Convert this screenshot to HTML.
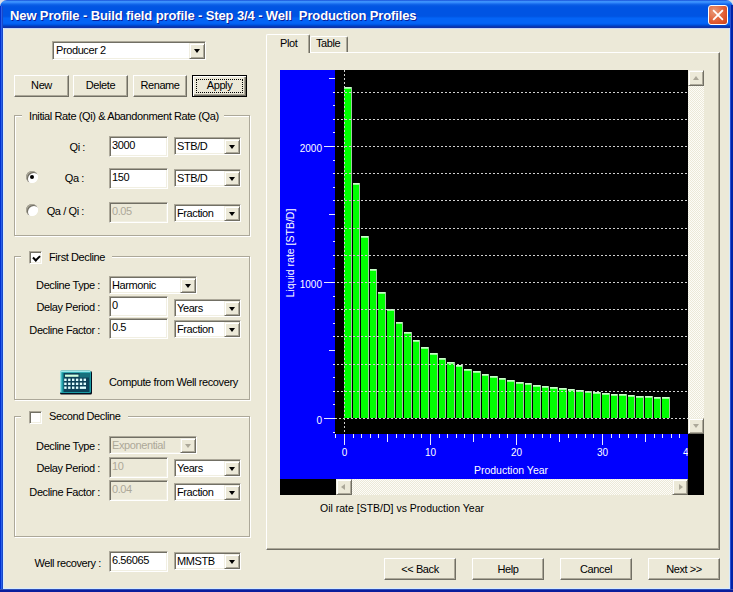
<!DOCTYPE html>
<html><head><meta charset="utf-8">
<style>
*{margin:0;padding:0;box-sizing:border-box}
html,body{width:733px;height:592px;overflow:hidden;background:#ece9d8}
body{position:relative;font-family:"Liberation Sans",sans-serif;font-size:11px;color:#000;letter-spacing:-0.4px}
.a{position:absolute}
.t{position:absolute;white-space:pre;line-height:13px}
#corner{position:absolute;left:0;top:0;width:733px;height:10px;background:#d9dde8}
#title{position:absolute;left:0;top:0;width:733px;height:29px;border-radius:7px 7px 0 0;
background:linear-gradient(to bottom,#0a3acf 0px,#3d8ef8 1px,#3c94ff 2px,#2d80f8 3px,#1569ec 4px,#0a5ee6 5px,#0556e2 6px,#0054e3 8px,#0054e3 16px,#0059e8 17px,#0464f6 18px,#0464f6 23px,#005ef2 24px,#0050da 25px,#0040c4 26px,#1033a8 27px,#1033a8 28px,#c9daf8 28px,#c9daf8 29px)}
#ttext{position:absolute;left:10px;top:8px;color:#fff;font-weight:bold;font-size:13px;letter-spacing:-0.12px;white-space:pre;line-height:15px;text-shadow:1px 1px 0 #0a1e9a}
#lb{position:absolute;left:0;top:6px;width:3px;height:586px;background:linear-gradient(to right,#0030d0 0,#0030d0 1px,#2a60e8 1px,#2a60e8 2px,#1848c8 2px)}
#ll{position:absolute;left:3px;top:28px;width:1px;height:561px;background:#d8ecff}
#rb{position:absolute;left:730px;top:5px;width:3px;height:587px;background:linear-gradient(to right,#2a50d0 0,#2a50d0 1px,#0024a8 1px)}
#rl{position:absolute;left:729px;top:28px;width:1px;height:561px;background:#d8ecff}
#bb{position:absolute;left:0;top:589px;width:733px;height:3px;background:linear-gradient(to bottom,#3050b8 0,#3050b8 1px,#0a1c9c 1px)}
#bl{position:absolute;left:3px;top:588px;width:727px;height:1px;background:#d8ecff}
#close{position:absolute;left:708px;top:5px;width:20px;height:20px;border:1px solid #fff;border-radius:3px;
background:radial-gradient(circle at 30% 30%,#e89a7a,#e05a30 60%,#c8401a)}

.btn{position:absolute;background:#ece9d8;border-top:1px solid #fff;border-left:1px solid #fff;border-right:1px solid #716f64;border-bottom:1px solid #716f64;box-shadow:inset -1px -1px 0 #aca899;text-align:center;line-height:19px;white-space:pre}
.btn.def{border:1px solid #000;box-shadow:inset 1px 1px 0 #fff,inset -1px -1px 0 #716f64,inset -2px -2px 0 #aca899}
.focus{position:absolute;left:3px;top:3px;right:3px;bottom:3px;border:1px dotted #000}
.ed{position:absolute;background:#fff;border-top:1px solid #aca899;border-left:1px solid #aca899;border-right:1px solid #fff;border-bottom:1px solid #fff;box-shadow:inset 1px 1px 0 #716f64,inset -1px -1px 0 #f1efe2}
.ed.dis{background:#ece9d8}
.et{position:absolute;left:2px;top:2px;white-space:pre;line-height:13px}
.cb.dis{background:#ece9d8}
.dis .et,.dis .ct{color:#aca899}
.cb{position:absolute;background:#fff;border-top:1px solid #aca899;border-left:1px solid #aca899;border-right:1px solid #fff;border-bottom:1px solid #fff;box-shadow:inset 1px 1px 0 #716f64,inset -1px -1px 0 #f1efe2}
.ct{position:absolute;left:2px;top:2px;white-space:pre;line-height:13px}
.dd{position:absolute;right:0;top:1px;bottom:0;width:16px;background:#ece9d8;border-top:1px solid #f1efe2;border-left:1px solid #f1efe2;border-right:1px solid #716f64;border-bottom:1px solid #716f64;box-shadow:inset 1px 1px 0 #fff,inset -1px -1px 0 #aca899}
.dd:after{content:"";position:absolute;left:4px;top:50%;margin-top:-2px;border-left:3.5px solid transparent;border-right:3.5px solid transparent;border-top:4px solid #000}
.dis .dd:after{border-top-color:#aca899}
.grp{position:absolute;border:1px solid #aca899;box-shadow:1px 1px 0 #fff,inset 1px 1px 0 #fff}
.lbl{background:#ece9d8}
.r{text-align:right}
.radio{position:absolute;width:12px;height:12px;border-radius:50%;background:#fff;box-shadow:inset 1px 1px 0 #aca899,inset 2px 2px 0 #716f64,inset -1px -1px 0 #fff}
.radio.on:after{content:"";position:absolute;left:4px;top:4px;width:4px;height:4px;border-radius:50%;background:#000}
.chk{position:absolute;width:13px;height:13px;background:#fff;border-top:1px solid #aca899;border-left:1px solid #aca899;border-right:1px solid #fff;border-bottom:1px solid #fff;box-shadow:inset 1px 1px 0 #716f64,inset -1px -1px 0 #f1efe2}
.chk.on:after{content:"";position:absolute;left:2px;top:1px;width:5px;height:3px;border-left:2px solid #000;border-bottom:2px solid #000;transform:translate(1px,2px) rotate(-45deg)}

.panel{position:absolute;border-top:1px solid #fff;border-left:1px solid #fff;border-right:1px solid #716f64;border-bottom:1px solid #716f64;box-shadow:inset -1px -1px 0 #aca899}
.tab{position:absolute;background:#ece9d8;border-top:1px solid #fff;border-left:1px solid #fff;border-right:1px solid #716f64;box-shadow:inset -1px 0 0 #aca899;border-radius:2px 2px 0 0}
.tab.sel{height:19px}
.vs{position:absolute;background:#f4f3ee;background-image:repeating-conic-gradient(#fdfcf8 0 25%,#ece9d8 0 50%);background-size:2px 2px;opacity:1}
.sbtn{position:absolute;width:16px;height:16px;background:#ece9d8;border-top:1px solid #f1efe2;border-left:1px solid #f1efe2;border-right:1px solid #716f64;border-bottom:1px solid #716f64;box-shadow:inset 1px 1px 0 #fff,inset -1px -1px 0 #aca899}
.arr{position:absolute;width:0;height:0}
.arr.up{left:3.5px;top:5px;border-left:3.5px solid transparent;border-right:3.5px solid transparent;border-bottom:4px solid #aca899}
.arr.dn{left:3.5px;top:5px;border-left:3.5px solid transparent;border-right:3.5px solid transparent;border-top:4px solid #aca899}
.arr.lt{left:4px;top:3.5px;border-top:3.5px solid transparent;border-bottom:3.5px solid transparent;border-right:4px solid #aca899}
.arr.rt{left:6px;top:3.5px;border-top:3.5px solid transparent;border-bottom:3.5px solid transparent;border-left:4px solid #aca899}
.ax{font-family:"Liberation Sans",sans-serif;font-size:10px;fill:#fff;letter-spacing:0}
.ax2{font-family:"Liberation Sans",sans-serif;font-size:10.5px;fill:#fff;letter-spacing:0}
.cap{font-size:10.5px;letter-spacing:0}
</style></head><body>
<div id="corner"></div>
<div id="title"><div id="ttext">New Profile - Build field profile - Step 3/4 - Well  Production Profiles</div></div>
<div id="close"><svg width="19" height="19" style="position:absolute;left:0;top:0"><path d="M4.8 4.8 L13.2 13.2 M13.2 4.8 L4.8 13.2" stroke="#fff" stroke-width="1.8" stroke-linecap="square"/></svg></div>
<div id="lb"></div><div id="ll"></div><div id="rb"></div><div id="rl"></div><div id="bb"></div><div id="bl"></div>
<div class="cb" style="left:52px;top:41px;width:154px;height:19px"><span class="ct" style="left:3px;top:2px">Producer 2</span><i class="dd"></i></div>
<div class="btn" style="left:14px;top:75px;width:55px;height:22px">New</div>
<div class="btn" style="left:73px;top:75px;width:55px;height:22px">Delete</div>
<div class="btn" style="left:133px;top:75px;width:54px;height:22px">Rename</div>
<div class="btn def" style="left:192px;top:75px;width:55px;height:22px"><b class="focus"></b>Apply</div>

<div class="grp" style="left:14px;top:115px;width:236px;height:121px"></div>
<span class="t lbl" style="left:22px;top:110px;padding:0 5px 0 7px">Initial Rate (Qi) &amp; Abandonment Rate (Qa)</span>
<span class="t r" style="right:648px;top:141px">Qi :</span>
<div class="ed" style="left:109px;top:136px;width:59px;height:21px"><span class="et">3000</span></div>
<div class="cb" style="left:174px;top:137px;width:67px;height:18px"><span class="ct">STB/D</span><i class="dd"></i></div>
<div class="radio on" style="left:26px;top:171px"></div>
<span class="t r" style="right:649px;top:172px">Qa :</span>
<div class="ed" style="left:109px;top:168px;width:59px;height:21px"><span class="et">150</span></div>
<div class="cb" style="left:174px;top:169px;width:67px;height:18px"><span class="ct">STB/D</span><i class="dd"></i></div>
<div class="radio" style="left:26px;top:204px"></div>
<span class="t r" style="right:649px;top:205px">Qa / Qi :</span>
<div class="ed dis" style="left:109px;top:202px;width:59px;height:21px"><span class="et">0.05</span></div>
<div class="cb" style="left:174px;top:204px;width:67px;height:18px"><span class="ct">Fraction</span><i class="dd"></i></div>

<div class="grp" style="left:14px;top:256px;width:236px;height:144px"></div>
<span class="t lbl" style="left:21px;top:250px;width:91px;height:13px"></span>
<div class="chk on" style="left:29px;top:251px"></div>
<span class="t" style="left:49px;top:251px">First Decline</span>
<span class="t r" style="right:633px;top:279px">Decline Type :</span>
<div class="cb" style="left:109px;top:276px;width:88px;height:18px"><span class="ct">Harmonic</span><i class="dd"></i></div>
<span class="t r" style="right:633px;top:301px">Delay Period :</span>
<div class="ed" style="left:109px;top:296px;width:59px;height:21px"><span class="et">0</span></div>
<div class="cb" style="left:174px;top:299px;width:67px;height:18px"><span class="ct">Years</span><i class="dd"></i></div>
<span class="t r" style="right:633px;top:324px">Decline Factor :</span>
<div class="ed" style="left:109px;top:318px;width:59px;height:21px"><span class="et">0.5</span></div>
<div class="cb" style="left:174px;top:320px;width:67px;height:18px"><span class="ct">Fraction</span><i class="dd"></i></div>
<svg class="a" style="left:59px;top:370px" width="34" height="25" viewBox="0 0 34 25">
<rect x="1" y="1" width="32" height="23.5" rx="1.5" fill="#040c1c"/>
<rect x="1" y="0.5" width="31" height="22.5" rx="1.5" fill="#1a9ca4"/>
<rect x="1.5" y="0.8" width="30" height="1.4" fill="#9ee8ea"/>
<rect x="1" y="1" width="1.4" height="21.5" fill="#8ee0e4"/>
<rect x="4.5" y="3" width="26" height="19" fill="#0c4258"/>
<rect x="20.5" y="3" width="10" height="4.5" fill="#16707c"/>
<rect x="6" y="4.6" width="13.5" height="2.2" fill="#d0ffe0"/>
<g fill="#e0ffff"><rect x="5.2" y="8.6" width="2.4" height="2.4"/><rect x="9.1" y="8.6" width="2.4" height="2.4"/><rect x="13.0" y="8.6" width="2.4" height="2.4"/><rect x="16.9" y="8.6" width="2.4" height="2.4"/><rect x="20.8" y="8.6" width="2.4" height="2.4"/><rect x="24.6" y="8.6" width="2.4" height="2.4"/><rect x="5.2" y="12.6" width="2.4" height="2.4"/><rect x="9.1" y="12.6" width="2.4" height="2.4"/><rect x="13.0" y="12.6" width="2.4" height="2.4"/><rect x="16.9" y="12.6" width="2.4" height="2.4"/><rect x="20.8" y="12.6" width="2.4" height="2.4"/><rect x="24.6" y="12.6" width="2.4" height="2.4"/><rect x="5.2" y="16.5" width="2.4" height="2.4"/><rect x="9.1" y="16.5" width="2.4" height="2.4"/><rect x="13.0" y="16.5" width="2.4" height="2.4"/><rect x="16.9" y="16.5" width="2.4" height="2.4"/><rect x="20.8" y="16.5" width="6.2" height="2.4"/></g></svg>
<span class="t" style="left:109px;top:376px">Compute from Well recovery</span>

<div class="grp" style="left:14px;top:416px;width:236px;height:121px"></div>
<span class="t lbl" style="left:21px;top:410px;width:107px;height:13px"></span>
<div class="chk" style="left:29px;top:411px"></div>
<span class="t" style="left:49px;top:410px">Second Decline</span>
<span class="t r" style="right:633px;top:440px">Decline Type :</span>
<div class="cb dis" style="left:109px;top:436px;width:88px;height:18px"><span class="ct">Exponential</span><i class="dd"></i></div>
<span class="t r" style="right:633px;top:462px">Delay Period :</span>
<div class="ed dis" style="left:109px;top:457px;width:59px;height:21px"><span class="et">10</span></div>
<div class="cb" style="left:174px;top:459px;width:67px;height:18px"><span class="ct">Years</span><i class="dd"></i></div>
<span class="t r" style="right:633px;top:486px">Decline Factor :</span>
<div class="ed dis" style="left:109px;top:480px;width:59px;height:21px"><span class="et">0.04</span></div>
<div class="cb" style="left:174px;top:483px;width:67px;height:18px"><span class="ct">Fraction</span><i class="dd"></i></div>

<span class="t r" style="right:632px;top:557px">Well recovery :</span>
<div class="ed" style="left:109px;top:551px;width:59px;height:21px"><span class="et">6.56065</span></div>
<div class="cb" style="left:174px;top:552px;width:67px;height:18px"><span class="ct">MMSTB</span><i class="dd"></i></div>

<div class="panel" style="left:266px;top:52px;width:454px;height:498px"></div>
<div class="tab" style="left:310px;top:36px;width:38px;height:16px"></div>
<span class="t" style="left:316px;top:37px">Table</span>
<div class="tab sel" style="left:266px;top:34px;width:44px;height:19px"></div>
<span class="t" style="left:280px;top:37px">Plot</span>

<svg class="a" style="left:0;top:0" width="733" height="592" viewBox="0 0 733 592"><rect x="688" y="434" width="16" height="61" fill="#000"/><rect x="280" y="479" width="56" height="16" fill="#000"/><defs><clipPath id="cp"><rect x="280" y="70" width="408" height="409"/></clipPath></defs><g clip-path="url(#cp)"><rect x="280" y="70" width="408" height="409" fill="#0000ff" />
<rect x="335" y="70" width="353" height="364" fill="#000" />
<rect x="344" y="87" width="8" height="331" fill="#00ff00" />
<rect x="344" y="87" width="8" height="1" fill="#c8ffc8" />
<rect x="344" y="88" width="8" height="1" fill="#90ff90" />
<rect x="351" y="87" width="1" height="331" fill="#a0c8a0" />
<rect x="353" y="183" width="7" height="235" fill="#00ff00" />
<rect x="353" y="183" width="7" height="1" fill="#c8ffc8" />
<rect x="353" y="184" width="7" height="1" fill="#90ff90" />
<rect x="359" y="183" width="1" height="235" fill="#a0c8a0" />
<rect x="361" y="236" width="8" height="182" fill="#00ff00" />
<rect x="361" y="236" width="8" height="1" fill="#c8ffc8" />
<rect x="361" y="237" width="8" height="1" fill="#90ff90" />
<rect x="368" y="236" width="1" height="182" fill="#a0c8a0" />
<rect x="370" y="269" width="7" height="149" fill="#00ff00" />
<rect x="370" y="269" width="7" height="1" fill="#c8ffc8" />
<rect x="370" y="270" width="7" height="1" fill="#90ff90" />
<rect x="376" y="269" width="1" height="149" fill="#a0c8a0" />
<rect x="378" y="292" width="8" height="126" fill="#00ff00" />
<rect x="378" y="292" width="8" height="1" fill="#c8ffc8" />
<rect x="378" y="293" width="8" height="1" fill="#90ff90" />
<rect x="385" y="292" width="1" height="126" fill="#a0c8a0" />
<rect x="387" y="309" width="8" height="109" fill="#00ff00" />
<rect x="387" y="309" width="8" height="1" fill="#c8ffc8" />
<rect x="387" y="310" width="8" height="1" fill="#90ff90" />
<rect x="394" y="309" width="1" height="109" fill="#a0c8a0" />
<rect x="396" y="322" width="7" height="96" fill="#00ff00" />
<rect x="396" y="322" width="7" height="1" fill="#c8ffc8" />
<rect x="396" y="323" width="7" height="1" fill="#90ff90" />
<rect x="402" y="322" width="1" height="96" fill="#a0c8a0" />
<rect x="404" y="332" width="8" height="86" fill="#00ff00" />
<rect x="404" y="332" width="8" height="1" fill="#c8ffc8" />
<rect x="404" y="333" width="8" height="1" fill="#90ff90" />
<rect x="411" y="332" width="1" height="86" fill="#a0c8a0" />
<rect x="413" y="340" width="7" height="78" fill="#00ff00" />
<rect x="413" y="340" width="7" height="1" fill="#c8ffc8" />
<rect x="413" y="341" width="7" height="1" fill="#90ff90" />
<rect x="419" y="340" width="1" height="78" fill="#a0c8a0" />
<rect x="421" y="347" width="8" height="71" fill="#00ff00" />
<rect x="421" y="347" width="8" height="1" fill="#c8ffc8" />
<rect x="421" y="348" width="8" height="1" fill="#90ff90" />
<rect x="428" y="347" width="1" height="71" fill="#a0c8a0" />
<rect x="430" y="353" width="8" height="65" fill="#00ff00" />
<rect x="430" y="353" width="8" height="1" fill="#c8ffc8" />
<rect x="430" y="354" width="8" height="1" fill="#90ff90" />
<rect x="437" y="353" width="1" height="65" fill="#a0c8a0" />
<rect x="439" y="358" width="7" height="60" fill="#00ff00" />
<rect x="439" y="358" width="7" height="1" fill="#c8ffc8" />
<rect x="439" y="359" width="7" height="1" fill="#90ff90" />
<rect x="445" y="358" width="1" height="60" fill="#a0c8a0" />
<rect x="447" y="362" width="8" height="56" fill="#00ff00" />
<rect x="447" y="362" width="8" height="1" fill="#c8ffc8" />
<rect x="447" y="363" width="8" height="1" fill="#90ff90" />
<rect x="454" y="362" width="1" height="56" fill="#a0c8a0" />
<rect x="456" y="365" width="7" height="53" fill="#00ff00" />
<rect x="456" y="365" width="7" height="1" fill="#c8ffc8" />
<rect x="456" y="366" width="7" height="1" fill="#90ff90" />
<rect x="462" y="365" width="1" height="53" fill="#a0c8a0" />
<rect x="464" y="369" width="8" height="49" fill="#00ff00" />
<rect x="464" y="369" width="8" height="1" fill="#c8ffc8" />
<rect x="464" y="370" width="8" height="1" fill="#90ff90" />
<rect x="471" y="369" width="1" height="49" fill="#a0c8a0" />
<rect x="473" y="371" width="8" height="47" fill="#00ff00" />
<rect x="473" y="371" width="8" height="1" fill="#c8ffc8" />
<rect x="473" y="372" width="8" height="1" fill="#90ff90" />
<rect x="480" y="371" width="1" height="47" fill="#a0c8a0" />
<rect x="482" y="374" width="7" height="44" fill="#00ff00" />
<rect x="482" y="374" width="7" height="1" fill="#c8ffc8" />
<rect x="482" y="375" width="7" height="1" fill="#90ff90" />
<rect x="488" y="374" width="1" height="44" fill="#a0c8a0" />
<rect x="490" y="376" width="8" height="42" fill="#00ff00" />
<rect x="490" y="376" width="8" height="1" fill="#c8ffc8" />
<rect x="490" y="377" width="8" height="1" fill="#90ff90" />
<rect x="497" y="376" width="1" height="42" fill="#a0c8a0" />
<rect x="499" y="378" width="7" height="40" fill="#00ff00" />
<rect x="499" y="378" width="7" height="1" fill="#c8ffc8" />
<rect x="499" y="379" width="7" height="1" fill="#90ff90" />
<rect x="505" y="378" width="1" height="40" fill="#a0c8a0" />
<rect x="507" y="380" width="8" height="38" fill="#00ff00" />
<rect x="507" y="380" width="8" height="1" fill="#c8ffc8" />
<rect x="507" y="381" width="8" height="1" fill="#90ff90" />
<rect x="514" y="380" width="1" height="38" fill="#a0c8a0" />
<rect x="516" y="382" width="8" height="36" fill="#00ff00" />
<rect x="516" y="382" width="8" height="1" fill="#c8ffc8" />
<rect x="516" y="383" width="8" height="1" fill="#90ff90" />
<rect x="523" y="382" width="1" height="36" fill="#a0c8a0" />
<rect x="525" y="383" width="7" height="35" fill="#00ff00" />
<rect x="525" y="383" width="7" height="1" fill="#c8ffc8" />
<rect x="525" y="384" width="7" height="1" fill="#90ff90" />
<rect x="531" y="383" width="1" height="35" fill="#a0c8a0" />
<rect x="533" y="385" width="8" height="33" fill="#00ff00" />
<rect x="533" y="385" width="8" height="1" fill="#c8ffc8" />
<rect x="533" y="386" width="8" height="1" fill="#90ff90" />
<rect x="540" y="385" width="1" height="33" fill="#a0c8a0" />
<rect x="542" y="386" width="7" height="32" fill="#00ff00" />
<rect x="542" y="386" width="7" height="1" fill="#c8ffc8" />
<rect x="542" y="387" width="7" height="1" fill="#90ff90" />
<rect x="548" y="386" width="1" height="32" fill="#a0c8a0" />
<rect x="550" y="387" width="8" height="31" fill="#00ff00" />
<rect x="550" y="387" width="8" height="1" fill="#c8ffc8" />
<rect x="550" y="388" width="8" height="1" fill="#90ff90" />
<rect x="557" y="387" width="1" height="31" fill="#a0c8a0" />
<rect x="559" y="388" width="8" height="30" fill="#00ff00" />
<rect x="559" y="388" width="8" height="1" fill="#c8ffc8" />
<rect x="559" y="389" width="8" height="1" fill="#90ff90" />
<rect x="566" y="388" width="1" height="30" fill="#a0c8a0" />
<rect x="568" y="389" width="7" height="29" fill="#00ff00" />
<rect x="568" y="389" width="7" height="1" fill="#c8ffc8" />
<rect x="568" y="390" width="7" height="1" fill="#90ff90" />
<rect x="574" y="389" width="1" height="29" fill="#a0c8a0" />
<rect x="576" y="390" width="8" height="28" fill="#00ff00" />
<rect x="576" y="390" width="8" height="1" fill="#c8ffc8" />
<rect x="576" y="391" width="8" height="1" fill="#90ff90" />
<rect x="583" y="390" width="1" height="28" fill="#a0c8a0" />
<rect x="585" y="391" width="7" height="27" fill="#00ff00" />
<rect x="585" y="391" width="7" height="1" fill="#c8ffc8" />
<rect x="585" y="392" width="7" height="1" fill="#90ff90" />
<rect x="591" y="391" width="1" height="27" fill="#a0c8a0" />
<rect x="593" y="392" width="8" height="26" fill="#00ff00" />
<rect x="593" y="392" width="8" height="1" fill="#c8ffc8" />
<rect x="593" y="393" width="8" height="1" fill="#90ff90" />
<rect x="600" y="392" width="1" height="26" fill="#a0c8a0" />
<rect x="602" y="393" width="8" height="25" fill="#00ff00" />
<rect x="602" y="393" width="8" height="1" fill="#c8ffc8" />
<rect x="602" y="394" width="8" height="1" fill="#90ff90" />
<rect x="609" y="393" width="1" height="25" fill="#a0c8a0" />
<rect x="611" y="394" width="7" height="24" fill="#00ff00" />
<rect x="611" y="394" width="7" height="1" fill="#c8ffc8" />
<rect x="611" y="395" width="7" height="1" fill="#90ff90" />
<rect x="617" y="394" width="1" height="24" fill="#a0c8a0" />
<rect x="619" y="394" width="8" height="24" fill="#00ff00" />
<rect x="619" y="394" width="8" height="1" fill="#c8ffc8" />
<rect x="619" y="395" width="8" height="1" fill="#90ff90" />
<rect x="626" y="394" width="1" height="24" fill="#a0c8a0" />
<rect x="628" y="395" width="7" height="23" fill="#00ff00" />
<rect x="628" y="395" width="7" height="1" fill="#c8ffc8" />
<rect x="628" y="396" width="7" height="1" fill="#90ff90" />
<rect x="634" y="395" width="1" height="23" fill="#a0c8a0" />
<rect x="636" y="396" width="8" height="22" fill="#00ff00" />
<rect x="636" y="396" width="8" height="1" fill="#c8ffc8" />
<rect x="636" y="397" width="8" height="1" fill="#90ff90" />
<rect x="643" y="396" width="1" height="22" fill="#a0c8a0" />
<rect x="645" y="396" width="8" height="22" fill="#00ff00" />
<rect x="645" y="396" width="8" height="1" fill="#c8ffc8" />
<rect x="645" y="397" width="8" height="1" fill="#90ff90" />
<rect x="652" y="396" width="1" height="22" fill="#a0c8a0" />
<rect x="654" y="397" width="7" height="21" fill="#00ff00" />
<rect x="654" y="397" width="7" height="1" fill="#c8ffc8" />
<rect x="654" y="398" width="7" height="1" fill="#90ff90" />
<rect x="660" y="397" width="1" height="21" fill="#a0c8a0" />
<rect x="662" y="397" width="8" height="21" fill="#00ff00" />
<rect x="662" y="397" width="8" height="1" fill="#c8ffc8" />
<rect x="662" y="398" width="8" height="1" fill="#90ff90" />
<rect x="669" y="397" width="1" height="21" fill="#a0c8a0" />
<line x1="333" y1="391.5" x2="688" y2="391.5" stroke="#d0d0d0" stroke-width="1" stroke-dasharray="2 2"/>
<line x1="333" y1="364.5" x2="688" y2="364.5" stroke="#d0d0d0" stroke-width="1" stroke-dasharray="2 2"/>
<line x1="333" y1="336.5" x2="688" y2="336.5" stroke="#d0d0d0" stroke-width="1" stroke-dasharray="2 2"/>
<line x1="333" y1="309.5" x2="688" y2="309.5" stroke="#d0d0d0" stroke-width="1" stroke-dasharray="2 2"/>
<line x1="333" y1="282.5" x2="688" y2="282.5" stroke="#d0d0d0" stroke-width="1" stroke-dasharray="2 2"/>
<line x1="333" y1="255.5" x2="688" y2="255.5" stroke="#d0d0d0" stroke-width="1" stroke-dasharray="2 2"/>
<line x1="333" y1="228.5" x2="688" y2="228.5" stroke="#d0d0d0" stroke-width="1" stroke-dasharray="2 2"/>
<line x1="333" y1="200.5" x2="688" y2="200.5" stroke="#d0d0d0" stroke-width="1" stroke-dasharray="2 2"/>
<line x1="333" y1="173.5" x2="688" y2="173.5" stroke="#d0d0d0" stroke-width="1" stroke-dasharray="2 2"/>
<line x1="333" y1="146.5" x2="688" y2="146.5" stroke="#d0d0d0" stroke-width="1" stroke-dasharray="2 2"/>
<line x1="333" y1="119.5" x2="688" y2="119.5" stroke="#d0d0d0" stroke-width="1" stroke-dasharray="2 2"/>
<line x1="333" y1="92.5" x2="688" y2="92.5" stroke="#d0d0d0" stroke-width="1" stroke-dasharray="2 2"/>
<line x1="335" y1="418.5" x2="688" y2="418.5" stroke="#d0d0d0" stroke-width="1" stroke-dasharray="2 2"/>
<line x1="344.5" y1="70" x2="344.5" y2="434" stroke="#d0d0d0" stroke-width="1" stroke-dasharray="2 2"/>
<line x1="333" y1="432.5" x2="335" y2="432.5" stroke="#e8e8ff" stroke-width="1"/>
<line x1="324" y1="418.5" x2="335" y2="418.5" stroke="#e8e8ff" stroke-width="1"/>
<line x1="333" y1="404.5" x2="335" y2="404.5" stroke="#e8e8ff" stroke-width="1"/>
<line x1="333" y1="391.5" x2="335" y2="391.5" stroke="#e8e8ff" stroke-width="1"/>
<line x1="333" y1="377.5" x2="335" y2="377.5" stroke="#e8e8ff" stroke-width="1"/>
<line x1="333" y1="364.5" x2="335" y2="364.5" stroke="#e8e8ff" stroke-width="1"/>
<line x1="329" y1="350.5" x2="335" y2="350.5" stroke="#e8e8ff" stroke-width="1"/>
<line x1="333" y1="336.5" x2="335" y2="336.5" stroke="#e8e8ff" stroke-width="1"/>
<line x1="333" y1="323.5" x2="335" y2="323.5" stroke="#e8e8ff" stroke-width="1"/>
<line x1="333" y1="309.5" x2="335" y2="309.5" stroke="#e8e8ff" stroke-width="1"/>
<line x1="333" y1="296.5" x2="335" y2="296.5" stroke="#e8e8ff" stroke-width="1"/>
<line x1="324" y1="282.5" x2="335" y2="282.5" stroke="#e8e8ff" stroke-width="1"/>
<line x1="333" y1="268.5" x2="335" y2="268.5" stroke="#e8e8ff" stroke-width="1"/>
<line x1="333" y1="255.5" x2="335" y2="255.5" stroke="#e8e8ff" stroke-width="1"/>
<line x1="333" y1="241.5" x2="335" y2="241.5" stroke="#e8e8ff" stroke-width="1"/>
<line x1="333" y1="228.5" x2="335" y2="228.5" stroke="#e8e8ff" stroke-width="1"/>
<line x1="329" y1="214.5" x2="335" y2="214.5" stroke="#e8e8ff" stroke-width="1"/>
<line x1="333" y1="200.5" x2="335" y2="200.5" stroke="#e8e8ff" stroke-width="1"/>
<line x1="333" y1="187.5" x2="335" y2="187.5" stroke="#e8e8ff" stroke-width="1"/>
<line x1="333" y1="173.5" x2="335" y2="173.5" stroke="#e8e8ff" stroke-width="1"/>
<line x1="333" y1="160.5" x2="335" y2="160.5" stroke="#e8e8ff" stroke-width="1"/>
<line x1="324" y1="146.5" x2="335" y2="146.5" stroke="#e8e8ff" stroke-width="1"/>
<line x1="333" y1="132.5" x2="335" y2="132.5" stroke="#e8e8ff" stroke-width="1"/>
<line x1="333" y1="119.5" x2="335" y2="119.5" stroke="#e8e8ff" stroke-width="1"/>
<line x1="333" y1="105.5" x2="335" y2="105.5" stroke="#e8e8ff" stroke-width="1"/>
<line x1="333" y1="92.5" x2="335" y2="92.5" stroke="#e8e8ff" stroke-width="1"/>
<line x1="329" y1="78.5" x2="335" y2="78.5" stroke="#e8e8ff" stroke-width="1"/>
<text x="322" y="423.6" text-anchor="end" class="ax">0</text>
<text x="322" y="287.6" text-anchor="end" class="ax">1000</text>
<text x="322" y="151.6" text-anchor="end" class="ax">2000</text>
<line x1="335.5" y1="434" x2="335.5" y2="438" stroke="#e8e8ff" stroke-width="1"/>
<line x1="344.5" y1="434" x2="344.5" y2="445" stroke="#e8e8ff" stroke-width="1"/>
<line x1="353.5" y1="434" x2="353.5" y2="438" stroke="#e8e8ff" stroke-width="1"/>
<line x1="361.5" y1="434" x2="361.5" y2="438" stroke="#e8e8ff" stroke-width="1"/>
<line x1="370.5" y1="434" x2="370.5" y2="438" stroke="#e8e8ff" stroke-width="1"/>
<line x1="378.5" y1="434" x2="378.5" y2="438" stroke="#e8e8ff" stroke-width="1"/>
<line x1="387.5" y1="434" x2="387.5" y2="442" stroke="#e8e8ff" stroke-width="1"/>
<line x1="396.5" y1="434" x2="396.5" y2="438" stroke="#e8e8ff" stroke-width="1"/>
<line x1="404.5" y1="434" x2="404.5" y2="438" stroke="#e8e8ff" stroke-width="1"/>
<line x1="413.5" y1="434" x2="413.5" y2="438" stroke="#e8e8ff" stroke-width="1"/>
<line x1="421.5" y1="434" x2="421.5" y2="438" stroke="#e8e8ff" stroke-width="1"/>
<line x1="430.5" y1="434" x2="430.5" y2="445" stroke="#e8e8ff" stroke-width="1"/>
<line x1="439.5" y1="434" x2="439.5" y2="438" stroke="#e8e8ff" stroke-width="1"/>
<line x1="447.5" y1="434" x2="447.5" y2="438" stroke="#e8e8ff" stroke-width="1"/>
<line x1="456.5" y1="434" x2="456.5" y2="438" stroke="#e8e8ff" stroke-width="1"/>
<line x1="464.5" y1="434" x2="464.5" y2="438" stroke="#e8e8ff" stroke-width="1"/>
<line x1="473.5" y1="434" x2="473.5" y2="442" stroke="#e8e8ff" stroke-width="1"/>
<line x1="482.5" y1="434" x2="482.5" y2="438" stroke="#e8e8ff" stroke-width="1"/>
<line x1="490.5" y1="434" x2="490.5" y2="438" stroke="#e8e8ff" stroke-width="1"/>
<line x1="499.5" y1="434" x2="499.5" y2="438" stroke="#e8e8ff" stroke-width="1"/>
<line x1="507.5" y1="434" x2="507.5" y2="438" stroke="#e8e8ff" stroke-width="1"/>
<line x1="516.5" y1="434" x2="516.5" y2="445" stroke="#e8e8ff" stroke-width="1"/>
<line x1="525.5" y1="434" x2="525.5" y2="438" stroke="#e8e8ff" stroke-width="1"/>
<line x1="533.5" y1="434" x2="533.5" y2="438" stroke="#e8e8ff" stroke-width="1"/>
<line x1="542.5" y1="434" x2="542.5" y2="438" stroke="#e8e8ff" stroke-width="1"/>
<line x1="550.5" y1="434" x2="550.5" y2="438" stroke="#e8e8ff" stroke-width="1"/>
<line x1="559.5" y1="434" x2="559.5" y2="442" stroke="#e8e8ff" stroke-width="1"/>
<line x1="568.5" y1="434" x2="568.5" y2="438" stroke="#e8e8ff" stroke-width="1"/>
<line x1="576.5" y1="434" x2="576.5" y2="438" stroke="#e8e8ff" stroke-width="1"/>
<line x1="585.5" y1="434" x2="585.5" y2="438" stroke="#e8e8ff" stroke-width="1"/>
<line x1="593.5" y1="434" x2="593.5" y2="438" stroke="#e8e8ff" stroke-width="1"/>
<line x1="602.5" y1="434" x2="602.5" y2="445" stroke="#e8e8ff" stroke-width="1"/>
<line x1="611.5" y1="434" x2="611.5" y2="438" stroke="#e8e8ff" stroke-width="1"/>
<line x1="619.5" y1="434" x2="619.5" y2="438" stroke="#e8e8ff" stroke-width="1"/>
<line x1="628.5" y1="434" x2="628.5" y2="438" stroke="#e8e8ff" stroke-width="1"/>
<line x1="636.5" y1="434" x2="636.5" y2="438" stroke="#e8e8ff" stroke-width="1"/>
<line x1="645.5" y1="434" x2="645.5" y2="442" stroke="#e8e8ff" stroke-width="1"/>
<line x1="654.5" y1="434" x2="654.5" y2="438" stroke="#e8e8ff" stroke-width="1"/>
<line x1="662.5" y1="434" x2="662.5" y2="438" stroke="#e8e8ff" stroke-width="1"/>
<line x1="671.5" y1="434" x2="671.5" y2="438" stroke="#e8e8ff" stroke-width="1"/>
<line x1="679.5" y1="434" x2="679.5" y2="438" stroke="#e8e8ff" stroke-width="1"/>
<text x="344.5" y="456" text-anchor="middle" class="ax">0</text>
<text x="430.5" y="456" text-anchor="middle" class="ax">10</text>
<text x="516.5" y="456" text-anchor="middle" class="ax">20</text>
<text x="602.5" y="456" text-anchor="middle" class="ax">30</text>
<text x="688.5" y="456" text-anchor="middle" class="ax">40</text>
<text x="511" y="474" text-anchor="middle" class="ax2">Production Year</text>
<text transform="translate(294,253) rotate(-90)" text-anchor="middle" class="ax2">Liquid rate [STB/D]</text></g></svg><div class="vs" style="left:688px;top:70px;width:16px;height:364px"></div>
<div class="sbtn" style="left:688px;top:70px"><i class="arr up"></i></div>
<div class="sbtn" style="left:688px;top:418px"><i class="arr dn"></i></div>
<div class="vs" style="left:336px;top:479px;width:352px;height:16px"></div>
<div class="sbtn" style="left:336px;top:479px"><i class="arr lt"></i></div>
<div class="sbtn" style="left:672px;top:479px"><i class="arr rt"></i></div>
<span class="t cap" style="left:320px;top:502px">Oil rate [STB/D] vs Production Year</span>

<div class="btn" style="left:384px;top:558px;width:72px;height:22px;line-height:21px">&lt;&lt; Back</div>
<div class="btn" style="left:472px;top:558px;width:72px;height:22px;line-height:21px">Help</div>
<div class="btn" style="left:560px;top:558px;width:72px;height:22px;line-height:21px">Cancel</div>
<div class="btn" style="left:648px;top:558px;width:72px;height:22px;line-height:21px">Next &gt;&gt;</div>

</body></html>
